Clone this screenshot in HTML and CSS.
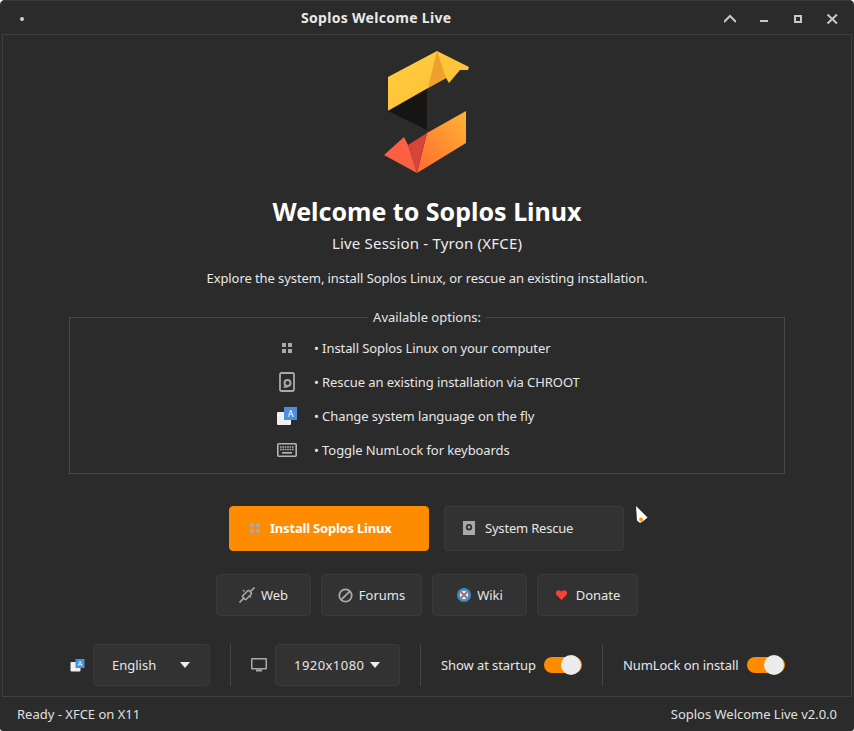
FILE: index.html
```html
<!DOCTYPE html>
<html lang="en">
<head>
<meta charset="utf-8">
<title>Soplos Welcome Live</title>
<link rel="stylesheet" href="styles.css">
</head>
<body>
<div class="window">
  <header class="titlebar">
    <span class="menu-dot"></span>
    <span class="title">Soplos Welcome Live</span>
    <div class="wm">
      <svg class="wm-icon" viewBox="0 0 12 12"><path d="M0 9 6 3l6 6" fill="none" stroke="#c8c8c8" stroke-width="2"/></svg>
      <svg class="wm-icon" viewBox="0 0 12 12"><rect x="2" y="7" width="8" height="2" fill="#c8c8c8"/></svg>
      <svg class="wm-icon" viewBox="0 0 12 12"><rect x="3" y="3" width="6" height="6" fill="none" stroke="#c8c8c8" stroke-width="2"/></svg>
      <svg class="wm-icon" viewBox="0 0 12 12"><path d="M1.500 1.500l9.500 9M11 1.500l-9.500 9" fill="none" stroke="#c8c8c8" stroke-width="2"/></svg>
    </div>
  </header>

  <main class="frame">
    <svg class="logo" viewBox="0 0 86 124" width="86" height="124">
      <defs>
        <linearGradient id="yg" x1="0" y1="0" x2="1" y2="1"><stop offset="0" stop-color="#ffd040"/><stop offset="1" stop-color="#fdb933"/></linearGradient>
        <linearGradient id="og" x1="0" y1="1" x2="1" y2="0"><stop offset="0" stop-color="#ff6a30"/><stop offset="1" stop-color="#ffb433"/></linearGradient>
      </defs>
      <polygon points="4,27 53,1 85,17 84,20 76,20 65,33 62,28 44,38 4,61" fill="url(#yg)"/>
      <polygon points="53,1 62,28 44,38" fill="#f0a02c"/>
      <polygon points="4,61 43,39 43,80" fill="#161514"/>
      <polygon points="82,61 82,93 33,123 43,83" fill="url(#og)"/>
      <polygon points="43,83 33,123 24,95" fill="#d9433a"/>
      <polygon points="24,95 20,87 0,105 33,123" fill="#fd5f42"/>
    </svg>
    <h1 class="heading">Welcome to Soplos Linux</h1>
    <p class="subtitle">Live Session - Tyron (XFCE)</p>
    <p class="description">Explore the system, install Soplos Linux, or rescue an existing installation.</p>

    <fieldset class="options">
      <legend class="options-legend">Available options:</legend>
      <ul class="options-list">
        <li class="option">
          <span class="option-icon"><svg width="12" height="12" viewBox="0 0 12 12"><g fill="#a9a9a9"><rect x="1" y="1" width="4" height="4"/><rect x="7" y="1" width="4" height="4"/><rect x="1" y="7" width="4" height="4"/><rect x="7" y="7" width="4" height="4"/></g></svg></span>
          <span>• Install Soplos Linux on your computer</span>
        </li>
        <li class="option">
          <span class="option-icon"><svg width="16" height="20" viewBox="0 0 16 20"><rect x="1" y="1" width="14" height="18" rx="1.500" fill="none" stroke="#a9a9a9" stroke-width="1.800"/><circle cx="8.500" cy="11" r="3" fill="none" stroke="#a9a9a9" stroke-width="2"/><path d="M4.500 15h4" stroke="#a9a9a9" stroke-width="1.600"/></svg></span>
          <span>• Rescue an existing installation via CHROOT</span>
        </li>
        <li class="option">
          <span class="option-icon"><svg width="22" height="20" viewBox="0 0 22 20"><rect x="1" y="6" width="14" height="13" rx="1" fill="#f0f0f0"/><rect x="8" y="1" width="13" height="13" fill="#4a8fe0"/><text x="14.500" y="11" class="icon-a">A</text></svg></span>
          <span>• Change system language on the fly</span>
        </li>
        <li class="option">
          <span class="option-icon"><svg width="20" height="14" viewBox="0 0 20 14"><rect x="0.800" y="0.800" width="18.400" height="12.400" rx="1" fill="none" stroke="#b4b4b4" stroke-width="1.600"/><path d="M3 4h14M3 6.500h14" stroke="#b4b4b4" stroke-width="1.600" stroke-dasharray="1.600 .8"/><path d="M5 9.800h10" stroke="#b4b4b4" stroke-width="1.600"/></svg></span>
          <span>• Toggle NumLock for keyboards</span>
        </li>
      </ul>
    </fieldset>

    <div class="primary-row">
      <button class="btn btn-install">
        <svg width="12" height="12" viewBox="0 0 12 12"><g fill="#a9a9a9"><rect x="1" y="1" width="4" height="4"/><rect x="7" y="1" width="4" height="4"/><rect x="1" y="7" width="4" height="4"/><rect x="7" y="7" width="4" height="4"/></g></svg>
        <span>Install Soplos Linux</span>
      </button>
      <button class="btn btn-rescue">
        <svg width="12" height="14" viewBox="0 0 12 14"><path fill="#a9a9a9" fill-rule="evenodd" d="M0 0h12v14H0zM6 3a3.200 3.200 0 1 0 0 6.400A3.200 3.200 0 0 0 6 3zM6 4.800a1.400 1.400 0 1 1 0 2.800 1.400 1.400 0 0 1 0-2.800z"/></svg>
        <span>System Rescue</span>
      </button>
    </div>

    <div class="link-row">
      <button class="btn btn-link btn-web">
        <svg width="16" height="16" viewBox="0 0 16 16"><g fill="none" stroke="#a9a9a9" stroke-width="1.600"><path d="M0.500 15.500 5 11M11 5l4.500-4.500"/><rect x="3.500" y="5.500" width="9" height="5" rx="1" transform="rotate(-45 8 8)"/><path d="M5.500 4.500l-1.500-1.500M12 10.500l-1.500-1.500" stroke-width="1.300"/></g></svg>
        <span>Web</span>
      </button>
      <button class="btn btn-link btn-forums">
        <svg width="15" height="15" viewBox="0 0 15 15"><circle cx="7.500" cy="7.500" r="6.200" fill="none" stroke="#a9a9a9" stroke-width="1.800"/><path d="M3.300 11.700l8.400-8.400" stroke="#a9a9a9" stroke-width="1.800"/></svg>
        <span>Forums</span>
      </button>
      <button class="btn btn-link btn-wiki">
        <svg width="14" height="14" viewBox="0 0 14 14"><circle cx="7" cy="7" r="7" fill="#3c8fc4"/><circle cx="7" cy="7" r="4.200" fill="#f3ebe6"/><path d="M4 4l2 2M10 10l-2-2M10 4l-2 2M4 10l2-2" stroke="#e2574c" stroke-width="2"/><circle cx="7" cy="7" r="1.800" fill="#3c8fc4"/></svg>
        <span>Wiki</span>
      </button>
      <button class="btn btn-link btn-donate">
        <svg width="11" height="10" viewBox="0 0 11 10"><path fill="#f44336" d="M5.500 10 .6 5C-.5 3.700-.1 1.600 1 .8 2.400-.3 4.500.1 5.500 1.700 6.500.1 8.600-.3 10 .8c1.100.8 1.500 2.900.4 4.200z"/></svg>
        <span>Donate</span>
      </button>
    </div>

    <div class="settings-row">
      <svg class="lang-icon" width="15" height="14" viewBox="0 0 15 14"><rect x="0.500" y="4" width="10" height="9.500" rx="1" fill="#f0f0f0"/><rect x="5.500" y="1" width="9" height="9" fill="#4a8fe0"/><text x="10" y="8" class="icon-a-small">A</text></svg>
      <button class="btn select select-lang"><span>English</span><i class="caret"></i></button>
      <span class="vsep"></span>
      <svg class="monitor-icon" width="16" height="14" viewBox="0 0 16 14"><path fill="#a9a9a9" fill-rule="evenodd" d="M1 0h14a1 1 0 0 1 1 1v9.500a1 1 0 0 1-1 1H1a1 1 0 0 1-1-1V1a1 1 0 0 1 1-1zM1.500 1.500v8.500h13V1.500z"/><rect x="5" y="11.500" width="6" height="2" fill="#a9a9a9"/></svg>
      <button class="btn select select-res"><span class="res-text">1920x1080</span><i class="caret"></i></button>
      <span class="vsep"></span>
      <span class="switch-label">Show at startup</span>
      <span class="switch"><span class="knob"></span></span>
      <span class="vsep"></span>
      <span class="switch-label">NumLock on install</span>
      <span class="switch"><span class="knob"></span></span>
    </div>
  </main>

  <footer class="statusbar">
    <span>Ready - XFCE on X11</span>
    <span class="status-right">Soplos Welcome Live v2.0.0</span>
  </footer>

  <svg class="cursor" width="13" height="19" viewBox="0 0 13 19"><path d="M1 1 12.500 12.500 9 15.500 5 18 2 15.500z" fill="#fff"/><circle cx="6" cy="14.500" r="2" fill="#ff9800"/></svg>
</div>
</body>
</html>
```
FILE: styles.css
```css
* { box-sizing: border-box; }
html, body { margin: 0; height: 100%; background: #fff; }
body { font-family: "Noto Sans", sans-serif; font-size: 13px; color: #e6e6e6; }
.window {
  position: relative;
  width: 854px;
  height: 731px;
  background: #2b2b2b;
  border-radius: 5px 5px 3px 3px;
  box-shadow: inset 0 1px 0 #3a3a3a;
  display: flex;
  flex-direction: column;
  padding: 0 2px;
  overflow: hidden;
}
.titlebar { position: relative; height: 34px; flex: none; display: flex; align-items: center; padding-left: 299px; }
.menu-dot { position: absolute; left: 18px; top: 17px; width: 4px; height: 4px; background: #d0d0d0; border-radius: 2px; }
.title { font-weight: 700; font-size: 14px; letter-spacing: .3px; color: #e8e8e8; }
.wm { position: absolute; right: 14px; top: 13px; display: flex; gap: 22px; }
.wm-icon { width: 12px; height: 12px; display: block; }

.frame {
  flex: none;
  height: 663px;
  border: 1px solid #3f3f3f;
  display: flex;
  flex-direction: column;
  align-items: center;
  padding-top: 15px;
}
.logo { display: block; flex: none; }
.heading { margin: 19px 0 0; font-size: 25px; line-height: 36px; font-weight: 700; color: #fff; }
.subtitle { margin: 3px 0 0; font-size: 15px; line-height: 22px; letter-spacing: .2px; color: #ededed; }
.description { margin: 14px 0 0; font-size: 13px; line-height: 20px; letter-spacing: -.08px; color: #e8e8e8; }

.options { width: 716px; height: 166px; margin: 20px 0 0; padding: 0; border: 1px solid #484848; flex: none; min-width: 0; }
.options-legend { margin: 0 auto; padding: 0 5px; font-size: 13px; line-height: 18px; color: #e6e6e6; }
.options-list { list-style: none; margin: 10px 0 0; padding: 0 0 0 200px; display: flex; flex-direction: column; gap: 10px; letter-spacing: -.08px; }
.option { display: flex; align-items: center; height: 24px; gap: 10px; }
.option-icon { width: 34px; display: flex; justify-content: center; flex: none; }

.btn { font: inherit; color: #e6e6e6; background: #323232; border: 1px solid #3b3b3b; border-radius: 4px; display: flex; align-items: center; padding: 0; }
.primary-row { display: flex; gap: 15px; margin: 32px 1px 0 0; }
.btn-install { width: 200px; height: 45px; background: #ff8c00; border-color: #ff8c00; color: #fff; font-weight: 700; letter-spacing: -.2px; padding: 0 0 2px 19px; gap: 9px; }
.btn-rescue { width: 180px; height: 45px; padding: 0 0 2px 18px; gap: 10px; letter-spacing: -.2px; }
.link-row { display: flex; gap: 10px; margin-top: 23px; }
.btn-link { height: 42px; justify-content: center; gap: 6px; }
.btn-web { width: 95px; }
.btn-forums { width: 101px; }
.btn-wiki { width: 95px; padding-left: 1px; }
.btn-donate { width: 101px; gap: 9px; padding-left: 1px; }

.settings-row { width: 100%; display: flex; align-items: center; height: 42px; margin-top: 28px; padding-left: 67px; }
.lang-icon { flex: none; margin-right: 8px; }
.select { height: 42px; justify-content: space-between; }
.select-lang { width: 117px; padding: 0 19px 0 18px; }
.select-res { width: 125px; padding: 0 19px 0 18px; }
.res-text { letter-spacing: .45px; }
.caret { width: 0; height: 0; border: 5px solid transparent; border-top: 6px solid #eee; border-bottom: 0; display: block; }
.vsep { width: 1px; height: 42px; background: #454545; margin: 0 20px; flex: none; }
.monitor-icon { flex: none; margin-right: 8px; }
.switch-label { color: #e6e6e6; white-space: nowrap; margin-right: 8px; width: 95px; letter-spacing: -.08px; }
.vsep + .switch-label ~ .vsep + .switch-label { width: 116px; }
.switch { position: relative; width: 38px; height: 16px; border-radius: 8px; background: #ff8c00; flex: none; }
.knob { position: absolute; right: 1px; top: -2px; width: 20px; height: 20px; border-radius: 50%; background: #ececec; }

.statusbar { flex: none; height: 34px; display: flex; justify-content: space-between; align-items: center; padding: 0 15px; color: #e0e0e0; }
.status-right { letter-spacing: -.02px; }
.icon-a { font-size: 9px; fill: #fff; text-anchor: middle; }
.icon-a-small { font-size: 7px; fill: #fff; text-anchor: middle; }
.cursor { position: absolute; left: 635px; top: 505px; }
```
